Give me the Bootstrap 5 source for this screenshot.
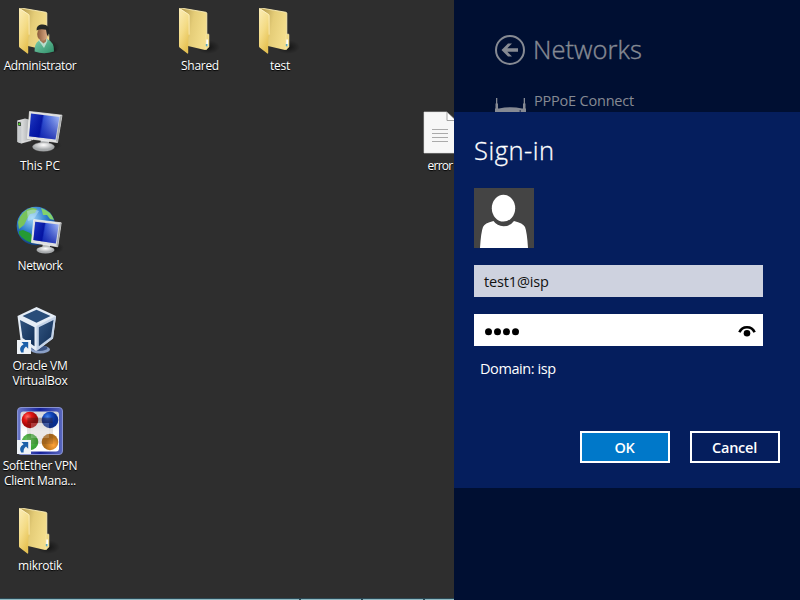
<!DOCTYPE html>
<html lang="en">
<head>
<meta charset="utf-8">
<meta name="viewport" content="width=device-width, initial-scale=1">
<title>Networks sign-in</title>
<link href="https://cdn.jsdelivr.net/npm/bootstrap@5.3.0/dist/css/bootstrap.min.css" rel="stylesheet">
<style>
  body { width: 800px; height: 600px; background: #2e2e2e; font-family: "Open Sans", "Noto Sans", sans-serif; }
  .desktop { width: 454px; height: 600px; }
  .icon-grid { display: grid; grid-template-columns: repeat(6, 80px); grid-template-rows: repeat(6, 100px); width: 480px; }
  .shortcut { padding-top: 8px; color: #fff; font-size: 12px; line-height: 15px; letter-spacing: -.3px; text-shadow: 0 1px 1px #000; white-space: nowrap; }
  .shortcut svg { width: 48px; height: 48px; overflow: visible; margin-bottom: 2px; }
  .taskbar { height: 2px; background: #8fb9c2; border-top: 1px solid #2a4854; left: 0; right: 0; bottom: 0; }
  .taskbar span { width: 62px; border-left: 2px solid #294550; }
  .pane { width: 346px; background: #000f32; color: #868a93; }
  .pane-top { height: 112px; padding: 33px 0 0 40px; }
  .pane-title { font-size: 25.5px; line-height: 32px; font-weight: 300; -webkit-text-stroke: .4px; letter-spacing: .05px; margin: 0 0 2px 7px; }
  .net-name { font-size: 14.5px; line-height: 20px; letter-spacing: -.2px; margin-left: 7px; }
  .dialog-box { height: 376px; background: #051e5d; color: #fff; padding: 21px 20px 0; }
  .dialog-title { font-size: 25.5px; line-height: 34px; font-weight: 300; -webkit-text-stroke: .3px; letter-spacing: .5px; }
  .avatar { width: 60px; height: 60px; margin-top: 21px; }
  .field { width: 289px; height: 32px; padding: 0 7px 0 10px; font-size: 14.5px; color: #111; background: #fff; }
  .field-muted { background: #ced2df; margin-top: 17px; margin-bottom: 17px; padding-top: 2px; letter-spacing: -.15px; }
  .domain { font-size: 14.5px; line-height: 20px; letter-spacing: -.42px; margin: 13px 0 0 6px; }
  .actions { gap: 20px; margin-top: 52px; }
  .actions .btn { width: 90px; height: 32px; padding: 1px 1px 0 0; border: 2px solid #fff; font-size: 14.5px; line-height: 28px; font-weight: 600; letter-spacing: -.25px; color: #fff; }
  .btn-ok { background: #0078c9; }
</style>
</head>
<body class="d-flex overflow-hidden m-0">

<svg width="0" height="0" class="position-absolute" aria-hidden="true">
  <defs>
    <linearGradient id="gBack" x1="0" x2="1" y2=".3"><stop offset="0" stop-color="#a98f45"/><stop offset=".55" stop-color="#e5cd78"/><stop offset="1" stop-color="#f3dd8b"/></linearGradient>
    <linearGradient id="gFlap" x2=".5" y2="1"><stop stop-color="#fbedb8"/><stop offset=".55" stop-color="#f4dc87"/><stop offset="1" stop-color="#e6c254"/></linearGradient>
    <linearGradient id="gScreen" x2="1" y2=".15"><stop stop-color="#2340c8"/><stop offset=".44" stop-color="#0718a4"/><stop offset=".5" stop-color="#3a5dda"/><stop offset="1" stop-color="#b4cbff"/></linearGradient>
    <linearGradient id="gShade" y2="1" x2="0"><stop stop-color="#0010a0" stop-opacity="0"/><stop offset="1" stop-color="#0010a0"/></linearGradient>
    <linearGradient id="gMetal" x2="1"><stop stop-color="#f4f4f4"/><stop offset="1" stop-color="#a5a8aa"/></linearGradient>
    <radialGradient id="gStand" cy=".3"><stop stop-color="#fff"/><stop offset="1" stop-color="#a6a9ab"/></radialGradient>
    <radialGradient id="gGlobe" cx=".4" cy=".3" r=".75"><stop stop-color="#9bd3f8"/><stop offset=".5" stop-color="#2d7ccc"/><stop offset="1" stop-color="#0c3576"/></radialGradient>
    <radialGradient id="gShadow"><stop stop-color="#000" stop-opacity=".55"/><stop offset="1" stop-color="#000" stop-opacity="0"/></radialGradient>
    <linearGradient id="gCube" x2="1" y2="1"><stop stop-color="#31547f"/><stop offset="1" stop-color="#112e56"/></linearGradient>
    <radialGradient id="gRed" cx=".35" cy=".3"><stop stop-color="#ff7066"/><stop offset=".5" stop-color="#e31412"/><stop offset="1" stop-color="#a80808"/></radialGradient>
    <radialGradient id="gBlue" cx=".35" cy=".3"><stop stop-color="#4583e8"/><stop offset=".5" stop-color="#1247bd"/><stop offset="1" stop-color="#082d8e"/></radialGradient>
    <radialGradient id="gGreen" cx=".4" cy=".4"><stop stop-color="#72c765"/><stop offset="1" stop-color="#3da637"/></radialGradient>
    <radialGradient id="gOrange" cx=".7" cy=".7"><stop stop-color="#ffa239"/><stop offset="1" stop-color="#b06d1c"/></radialGradient>
    <linearGradient id="gFrame" x2="1"><stop stop-color="#6c79c8"/><stop offset=".5" stop-color="#14209a"/><stop offset="1" stop-color="#5a68bd"/></linearGradient>
    <linearGradient id="gPlate" y2="1" x2="0"><stop stop-color="#d4d4d8"/><stop offset=".5" stop-color="#fff"/></linearGradient>
    <linearGradient id="gSkin" x2="1"><stop stop-color="#8a5a3a"/><stop offset="1" stop-color="#e0b08a"/></linearGradient>
    <linearGradient id="gShirt" x2="1" y2="1"><stop stop-color="#7fcfae"/><stop offset="1" stop-color="#2e8f68"/></linearGradient>

    <symbol id="folder" viewBox="16 8 48 48">
      <ellipse cx="48" cy="47" rx="12" ry="7" fill="url(#gShadow)"/>
      <path d="M19 8.3 21 8 46 12.3Q46.8 12.6 46.8 13.4V49.5L45 50 28 46Z" fill="url(#gBack)"/>
      <path d="M21 8 46 12.3Q46.8 12.6 46.8 13.4V49" fill="none" stroke="#faedb5" stroke-width=".9"/>
      <path d="M46 34.2 48.3 34Q49 34 49 35V47L46 49.4Z" fill="#f0d984" stroke="#f9ecb8" stroke-width=".5"/>
      <path d="M46.3 39.5H48V46H46.3Z" fill="#fff"/><path d="M45.8 44H47.5V46.3H45.8Z" fill="#59a8b8"/>
      <path d="M19 9Q19 7.9 20 8.3L28.6 14.2Q29.4 14.8 29.4 16V35L28.2 37V53Q28 54.1 27 53.3L19.6 47.6Q19 47 19 46Z" fill="url(#gFlap)"/>
      <path d="M19.5 8.5 28.7 14.6Q29.1 15 29.1 16V34.7" fill="none" stroke="#fff6d3" stroke-width=".7"/>
    </symbol>
    <symbol id="arrow" viewBox="0 0 14 14">
      <path d="M0 0H14V14H0Z" fill="#eef2f6"/>
      <path d="M4.5 2H11.2V8.8L9 6.6Q6.2 8.7 6.6 12.6H4.2Q1 7.4 6.6 4.2Z" fill="#1b5fa9"/>
    </symbol>
  </defs>
</svg>

<main class="desktop position-relative overflow-hidden flex-shrink-0">
  <div class="icon-grid">
    <div class="shortcut d-flex flex-column align-items-center text-center" style="grid-area:1/1">
      <svg viewBox="16 8 48 48"><use href="#folder" x="16" y="8" width="48" height="48"/>
        <ellipse cx="49" cy="50" rx="9" ry="4" fill="url(#gShadow)"/>
        <path d="M34.6 51.5Q34.5 43.2 38.5 41L42 38.5 47 39Q54.5 42 54 51.5Q44 55 34.6 51.5Z" fill="url(#gShirt)"/>
        <path d="M38.7 40.5 41 37 47 38 47.5 41 44 48Z" fill="#b9dccb"/><path d="M40 37.5 46.5 36 46 41.5 43.5 43.5 40 40.5Z" fill="#a57451"/>
        <ellipse cx="42.5" cy="34" rx="5.3" ry="6.8" fill="url(#gSkin)"/>
        <path d="M36.6 30.5Q36.3 25.4 41 24.6Q49.4 23.6 49 31L48.2 36.8 46.9 34.5 46 29.8Q41 28.2 36.6 30.5Z" fill="#252826"/></svg>
      <span style="letter-spacing:-.36px">Administrator</span>
    </div>
    <div class="shortcut d-flex flex-column align-items-center text-center" style="grid-area:1/3">
      <svg viewBox="16 8 48 48"><use href="#folder" x="16" y="8" width="48" height="48"/></svg>
      <span>Shared</span>
    </div>
    <div class="shortcut d-flex flex-column align-items-center text-center" style="grid-area:1/4">
      <svg viewBox="16 8 48 48"><use href="#folder" x="16" y="8" width="48" height="48"/></svg>
      <span>test</span>
    </div>
    <div class="shortcut d-flex flex-column align-items-center text-center" style="grid-area:2/1">
      <svg viewBox="16 8 48 48">
        <ellipse cx="46" cy="45" rx="16" ry="6" fill="url(#gShadow)"/>
        <path d="M17.5 20.5 25 18.5 31 20V41L21.5 43.5 17.5 42Z" fill="url(#gMetal)"/>
        <path d="M17.5 20.5 21.5 21.3V43.5L17.5 42Z" fill="#c8cbcd"/><path d="M18 22 20.8 22.5V26L18 25.5Z" fill="#202520"/><path d="M18.4 23.2H20.2V25H18.4Z" fill="#56db28"/>
        <path d="M22 42 33 39.5" stroke="#ddd" stroke-width="1"/>
        <path d="M41 39 49 40V45H40Z" fill="#babdbf"/><ellipse cx="43.5" cy="46.8" rx="11" ry="4.4" fill="url(#gStand)" stroke="#999" stroke-width=".4"/>
        <path d="M29.5 11.5 62 15.2 57.5 42.5 27.5 38.5Z" fill="#dedfdf" stroke="#f7f7f7" stroke-width=".7"/>
        <path d="M62 15.2 57.5 42.5 56 41 60 16.5Z" fill="#a9acae"/>
        <path d="M31 13.5 59.5 17 55.5 39.5 29.2 36.2Z" fill="url(#gScreen)"/><path d="M31 13.5 59.5 17 55.5 39.5 29.2 36.2Z" fill="url(#gShade)" opacity=".75"/></svg>
      <span style="letter-spacing:-.1px">This PC</span>
    </div>
    <div class="shortcut d-flex flex-column align-items-center text-center" style="grid-area:3/1">
      <svg viewBox="16 8 48 48">
        <circle cx="36" cy="26" r="19.3" fill="url(#gGlobe)"/>
        <path d="M18 22Q21 11 32 7.5L37 9 35 13 30 14 27 19 24 25 19 29Z" fill="#78c35b"/>
        <path d="M41 8Q51 11 54 20L50 19 47 15 43 15 42 11Z" fill="#83d16b"/>
        <path d="M19 31 23 30 30 33 34 38 33 43Q24 41 19 34Z" fill="#259a34"/>
        <path d="M27 11Q34 8 39 11L34 19 28 21Z" fill="#c7ecf7" opacity=".45"/>
        <ellipse cx="53" cy="48" rx="11" ry="6" fill="url(#gShadow)"/>
        <path d="M43 43H50V49H42Z" fill="#b5b8ba"/><ellipse cx="45.5" cy="50" rx="9" ry="3.4" fill="url(#gStand)"/>
        <path d="M33.7 19.5 61.2 22.8 57.7 46.8 31.5 42.5Z" fill="#dedfdf" stroke="#f7f7f7" stroke-width=".7"/>
        <path d="M61.2 22.8 57.7 46.8 56.5 45.5 59.6 24Z" fill="#a5a8aa"/>
        <path d="M35.2 21.7 58.8 24.6 55.8 43.5 33.4 40Z" fill="url(#gScreen)"/><path d="M35.2 21.7 58.8 24.6 55.8 43.5 33.4 40Z" fill="url(#gShade)" opacity=".75"/></svg>
      <span style="letter-spacing:-.4px">Network</span>
    </div>
    <div class="shortcut d-flex flex-column align-items-center text-center" style="grid-area:4/1">
      <svg viewBox="16 8 48 48">
        <ellipse cx="40" cy="49.5" rx="10" ry="4" fill="#8ba0c6"/><ellipse cx="39.5" cy="48" rx="8" ry="3" fill="#3b5482"/>
        <path d="M36.5 7 56 16 53 38.5 36 51 20.5 40 17.5 16Z" fill="#e5edf6"/>
        <path d="M36.5 51 53 38.5 56 16 36.5 26Z" fill="#c4d3e7"/>
        <path d="M36.5 9.7 50.5 16 36.5 22.8 22.5 16Z" fill="#294d79"/>
        <path d="M20 20 34.5 27.2V46.2L22.5 38Z" fill="url(#gCube)"/>
        <path d="M53.5 20 38.8 27.2V46.2L51 37Z" fill="url(#gCube)"/>
        <use href="#arrow" x="17" y="40" width="14" height="14"/></svg>
      <span style="letter-spacing:-.28px">Oracle VM<br>VirtualBox</span>
    </div>
    <div class="shortcut d-flex flex-column align-items-center text-center" style="grid-area:5/1">
      <svg viewBox="16 8 48 48">
        <rect x="17.5" y="7.5" width="45" height="47" rx="3.5" fill="url(#gFrame)" stroke="#8892cf"/>
        <rect x="20.5" y="11.5" width="38.5" height="40" rx="3" fill="url(#gPlate)"/>
        <circle cx="30" cy="20" r="8.3" fill="url(#gRed)"/><circle cx="50" cy="20" r="8.3" fill="url(#gBlue)"/>
        <circle cx="30" cy="42" r="8.3" fill="url(#gGreen)"/><circle cx="50" cy="42" r="8.3" fill="url(#gOrange)"/>
        <path d="M27 17H53V44H27Z" fill="#3b2525" opacity=".13"/><path d="M31 23H49V38H31Z" fill="#fff" opacity=".2"/>
        <path d="M27.5 18H52.5V23H27.5Z" fill="#321818" opacity=".3"/>
        <use href="#arrow" x="17" y="40" width="14" height="14"/></svg>
      <span style="letter-spacing:-.3px">SoftEther VPN<br>Client Mana...</span>
    </div>
    <div class="shortcut d-flex flex-column align-items-center text-center" style="grid-area:6/1">
      <svg viewBox="16 8 48 48"><use href="#folder" x="16" y="8" width="48" height="48"/></svg>
      <span>mikrotik</span>
    </div>
    <div class="shortcut d-flex flex-column align-items-center text-center" style="grid-area:2/6">
      <svg viewBox="16 8 48 48">
        <path d="M24 12H47L56 21V53H24Z" fill="#f7f7f7" stroke="#ddd" stroke-width=".6"/>
        <path d="M47 12V20.5H56Z" fill="#fff" stroke="#8c8c8c" stroke-width=".8"/>
        <path d="M32 29.5H48M32 33.5H48M32 37.5H48M32 41.5H48" stroke="#aaa" stroke-width="1"/></svg>
      <span style="letter-spacing:-.7px">error</span>
    </div>
  </div>
  <div class="taskbar position-absolute d-flex justify-content-end">
    <span></span><span></span><span style="width:31px"></span>
  </div>
</main>

<aside class="pane flex-shrink-0">
  <header class="pane-top overflow-hidden">
    <div class="d-flex align-items-center">
      <svg width="32" height="34" viewBox="0 0 32 34"><circle cx="16" cy="17" r="14" fill="none" stroke="#868a93" stroke-width="2"/><path d="M7.5 17 14 10.5H18L13.3 15.3H24V18.7H13.3L18 23.5H14Z" fill="#868a93"/></svg>
      <h1 class="pane-title">Networks</h1>
    </div>
    <div class="d-flex" style="margin-top:24px">
      <svg width="33" height="22" viewBox="0 0 33 22" fill="#868a93"><path d="M2 7H3.3V12L4 13V18H1.5V13L2 12ZM29.7 7H31V12L31.5 13V18H29V13L29.7 12Z"/><path d="M1 17.5H5Q16.5 15 28 17.5H32V22H1Z"/><path d="M25.5 19H27V21H25.5Z" fill="#3f4762"/></svg>
      <div class="net-name">PPPoE Connect</div>
    </div>
  </header>
  <section class="dialog-box">
    <h2 class="dialog-title mb-0">Sign-in</h2>
    <svg class="avatar d-block" viewBox="0 0 60 60"><path d="M0 0H60V60H0Z" fill="#444"/><ellipse cx="29.5" cy="20.2" rx="11.7" ry="13.4" fill="#fff"/><path d="M6 60Q7 44 9 39Q10.5 35 19.5 33Q23 38 29.5 38.3Q36.5 38 40 33Q49 35 51 39Q53 44 54 60Z" fill="#fff"/></svg>
    <div class="field field-muted d-flex align-items-center">test1@isp</div>
    <div class="field d-flex align-items-center justify-content-between">
      <svg width="37" height="12" viewBox="0 0 37 12"><g fill="#000"><circle cx="4.5" cy="7.8" r="3.5"/><circle cx="13.5" cy="7.8" r="3.5"/><circle cx="22.5" cy="7.8" r="3.5"/><circle cx="31.5" cy="7.8" r="3.5"/></g></svg>
      <svg width="18" height="14" viewBox="0 0 18 14"><path d="M1.4 9.3Q3.5 4.2 9 4.2T16.6 9.3" fill="none" stroke="#000" stroke-width="2.6"/><circle cx="9" cy="10.3" r="3.3" fill="#000"/></svg>
    </div>
    <div class="domain">Domain: isp</div>
    <div class="actions d-flex justify-content-end">
      <button type="button" class="btn btn-ok rounded-0">OK</button>
      <button type="button" class="btn rounded-0">Cancel</button>
    </div>
  </section>
</aside>
<script src="https://cdn.jsdelivr.net/npm/bootstrap@5.3.0/dist/js/bootstrap.bundle.min.js"></script>
</body>
</html>
